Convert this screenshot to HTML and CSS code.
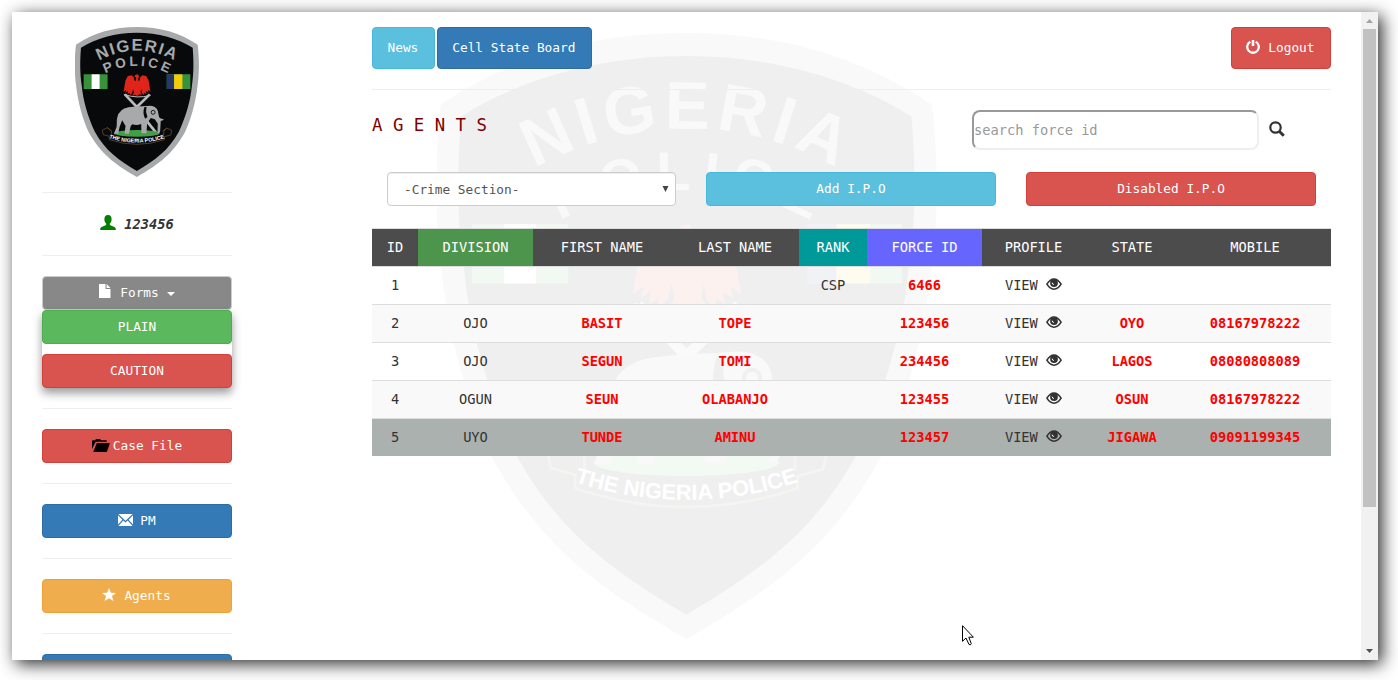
FILE: index.html
```html
<!DOCTYPE html>
<html lang="en">
<head>
<meta charset="utf-8">
<title>Agents</title>
<link rel="stylesheet" href="styles.css">
</head>
<body>
<svg class="defs" width="0" height="0" aria-hidden="true">
  <symbol id="crest" viewBox="225 80 373 450" preserveAspectRatio="none">
    <path fill="#a7a9ab" d="M411 80C480 80 540 97 594 133C600 180 598 225 594 253C588 310 572 360 556 395C520 460 480 490 411 530C342 490 302 460 266 395C250 360 234 310 228 253C224 225 222 180 228 133C282 97 342 80 411 80Z"/>
    <path fill="#07090b" d="M411 97C475 97 535 114 579 142C583 190 581 225 577 253C573 300 558 350 537 395C505 452 465 480 411 512C357 480 317 452 285 395C264 350 249 300 245 253C241 225 239 190 243 142C287 114 347 97 411 97Z"/>
    <path id="arcTop" fill="none" d="M280 192A230 230 0 0 1 542 192"/>
    <path id="arcMid" fill="none" d="M296 232A205 205 0 0 1 526 232"/>
    <path id="arcLow" fill="none" d="M315 409A270 270 0 0 0 507 409"/>
    <text class="crest-name" font-size="50" letter-spacing="4.500"><textPath href="#arcTop" startOffset="50.500%">NIGERIA</textPath></text>
    <text class="crest-name" font-size="41" letter-spacing="8.500"><textPath href="#arcMid" startOffset="51.500%">POLICE</textPath></text>
    <path fill="#38913d" d="M251 222h72v44h-72zM501 222h71v44h-71z"/>
    <path fill="#fff" d="M275 222h24v44h-24z"/>
    <path fill="#25386b" d="M501 222h22v44h-22z"/>
    <path fill="#f5cc0a" d="M523 222h25v44h-25z"/>
    <path fill="#df2519" d="M407 223l6-1 5 5-3 8 1 8 4-4 1-8 7-6 11 2 7 12 6 35-8-6 2 9-8-5 2 9-7-4 0 8-7-7-2-12-2 10 5 8-8-2-7 5-7-4-8 3 5-9-2-11-3 12-7 7 0-8-7 5 2-10-8 5 2-9-8 6 6-34 7-13 11-2 7 6 1 8 4 4 2-8-1-5-5 1z"/>
    <path fill="none" stroke="#b9bbbd" stroke-width="8" d="M375 282l36 38 39-38M435 355l38 47"/>
    <path fill="none" stroke="#b9bbbd" stroke-width="3" d="M372 282q40 14 80 3"/>
    <ellipse cx="411" cy="399" rx="69" ry="10" fill="#3fa045"/>
    <path fill="#a7a9ab" d="M352 352q6-27 34-31 24-3 40-3l16-1q25-3 32 14l4 20q5 6 14 5-2 7-9 5l-2 33q-3 7-8 3l1-27-9-13-12-4-11 16-2 30h-15l-1-28q-14 5-26 1l-5 4-6 24h-13l3-23-10-17-8 20-4 20h-13l8-20 2-23-5 19z"/>
    <path fill="#07090b" d="M434 320q-7 18 2 35l7-5q-7-15-3-30z"/>
    <circle cx="460" cy="336" r="6" fill="none" stroke="#17191b" stroke-width="3"/>
    <path fill="none" stroke="#7a5b2d" stroke-width="2" d="M335 393l-13-11-15 8 3 13 18 5v10q84 28 166 0v-9l19-5 3-14-16-7-12 10M322 382l13 10v12M500 384l-8 9v12"/>
    <text class="crest-motto" font-size="16.300"><textPath href="#arcLow" startOffset="50%">THE NIGERIA POLICE</textPath></text>
  </symbol>
  <symbol id="eye" viewBox="0 0 16 12">
    <path fill="none" stroke="currentColor" stroke-width="1.600" d="M.9 6.2Q4 1 8 1t7.1 5.200Q12 11.200 8 11.200T.9 6.200z"/>
    <circle cx="8" cy="5" r="3.900" fill="currentColor"/>
    <path fill="none" stroke="#fff" stroke-width="1" d="M6.200 4.700q0 1.800 1.700 1.800"/>
  </symbol>
</svg>

<div class="window">
  <svg class="watermark"><use href="#crest"/></svg>

  <aside class="sidebar">
    <svg class="logo"><use href="#crest"/></svg>
    <hr>
    <div class="user">
      <svg class="icon-user" viewBox="0 0 16 15"><path fill="green" d="M8 0c2.700 0 3.600 1.800 3.600 4.200 0 2.200-.9 3.500-1.700 4.300-.3 1 0 1.600.9 1.900l3.700 1.500c1 .4 1.300 1.300 1.300 3.100H.2c0-1.800.3-2.700 1.300-3.100l3.700-1.500c.9-.3 1.200-.9.9-1.900-.8-.8-1.700-2.100-1.700-4.300C4.400 1.800 5.300 0 8 0z"/></svg>
      <span>123456</span>
    </div>
    <hr>
    <div class="dropdown">
      <button class="btn gray"><svg class="icon-file" viewBox="0 0 12 14"><path fill="#fff" d="M0 0h6.500v5H11.500v9H0zM7.600 0l3.900 4H7.600z"/></svg><span>Forms</span><i class="caret"></i></button>
      <div class="menu">
        <button class="btn green">PLAIN</button>
        <button class="btn red">CAUTION</button>
      </div>
    </div>
    <hr>
    <button class="btn red"><svg class="icon-folder" viewBox="0 0 18 13"><path d="M0 10V2.200q0-.9.9-.9H3L4 0h4l1 1.300h5q.8 0 .8.900v.6H4.500q-1 0-1.400.9zM4.800 4H17.300q.7 0 .4.700l-2.600 7.600q-.2.700-1 .7H1.200z"/></svg><span>Case File</span></button>
    <hr>
    <button class="btn blue"><svg class="icon-mail" viewBox="0 0 15 12"><path fill="#fff" d="M.4 0h14.200L7.500 6.700zM0 1.200L4.400 5.700 0 10.400zM15 1.200v9.200l-4.400-4.700zM5.300 6.600l2.200 2 2.200-2L14.600 12H.4z"/></svg><span>PM</span></button>
    <hr>
    <button class="btn orange"><svg class="icon-star" viewBox="0 0 14 13"><path fill="#fff" d="M7 0l1.900 4.800 5.100.1-4 3.200L11.400 13 7 10.200 2.600 13 4 8.100 0 4.900l5.100-.1z"/></svg><span>Agents</span></button>
    <hr>
    <button class="btn blue"></button>
  </aside>

  <main class="main">
    <div class="topbar">
      <button class="btn tall cyan">News</button>
      <button class="btn tall blue">Cell State Board</button>
      <button class="btn tall red logout"><svg class="icon-off" viewBox="0 0 14 14"><path fill="none" stroke="#fff" stroke-width="2.300" d="M4.300 1.800A5.800 5.800 0 1 0 9.700 1.800"/><path stroke="#fff" stroke-width="2.600" d="M7 0v6"/></svg><span>Logout</span></button>
    </div>
    <hr>
    <div class="heading">
      <h1>A G E N T S</h1>
      <input class="search" type="text" placeholder="search force id">
      <svg class="icon-search" viewBox="0 0 16 16"><circle cx="6.500" cy="6.500" r="5.200" fill="none" stroke="#333" stroke-width="2.200"/><path stroke="#333" stroke-width="3" d="M10.200 10.200l4.600 4.600"/></svg>
    </div>
    <div class="filters">
      <div class="select"><span>-Crime Section-</span><svg class="arrow" viewBox="0 0 6 6"><path fill="#444" d="M0 0h6L3 6z"/></svg></div>
      <button class="btn cyan">Add I.P.O</button>
      <button class="btn red">Disabled I.P.O</button>
    </div>
    <table>
      <colgroup><col class="c46"><col class="c115"><col class="c138"><col class="c128"><col class="c68"><col class="c115"><col class="c103"><col class="c94"><col></colgroup>
      <thead>
        <tr><th>ID</th><th class="h-division">DIVISION</th><th>FIRST NAME</th><th>LAST NAME</th><th class="h-rank">RANK</th><th class="h-force">FORCE ID</th><th>PROFILE</th><th>STATE</th><th>MOBILE</th></tr>
      </thead>
      <tbody>
        <tr><td>1</td><td></td><td></td><td></td><td>CSP</td><td><b>6466</b></td><td>VIEW <svg class="eye"><use href="#eye"/></svg></td><td></td><td></td></tr>
        <tr class="stripe"><td>2</td><td>OJO</td><td><b>BASIT</b></td><td><b>TOPE</b></td><td></td><td><b>123456</b></td><td>VIEW <svg class="eye"><use href="#eye"/></svg></td><td><b>OYO</b></td><td><b>08167978222</b></td></tr>
        <tr><td>3</td><td>OJO</td><td><b>SEGUN</b></td><td><b>TOMI</b></td><td></td><td><b>234456</b></td><td>VIEW <svg class="eye"><use href="#eye"/></svg></td><td><b>LAGOS</b></td><td><b>08080808089</b></td></tr>
        <tr class="stripe"><td>4</td><td>OGUN</td><td><b>SEUN</b></td><td><b>OLABANJO</b></td><td></td><td><b>123455</b></td><td>VIEW <svg class="eye"><use href="#eye"/></svg></td><td><b>OSUN</b></td><td><b>08167978222</b></td></tr>
        <tr class="hover"><td>5</td><td>UYO</td><td><b>TUNDE</b></td><td><b>AMINU</b></td><td></td><td><b>123457</b></td><td>VIEW <svg class="eye"><use href="#eye"/></svg></td><td><b>JIGAWA</b></td><td><b>09091199345</b></td></tr>
      </tbody>
    </table>
  </main>

  <div class="scrollbar">
    <svg class="sb-arrow" viewBox="0 0 17 17"><path fill="#a3a3a3" d="M5 11h7L8.500 7z"/></svg>
    <div class="thumb"></div>
    <svg class="sb-arrow" viewBox="0 0 17 17"><path fill="#505050" d="M5 6h7L8.500 10z"/></svg>
  </div>

  <svg class="cursor" viewBox="0 0 12 21"><path fill="#fff" stroke="#000" d="M.5.700V16.300L4 13l3 6.500q1.500 1 2.300-.7L6.800 12.200h4.600z"/></svg>
</div>
</body>
</html>
```
FILE: styles.css
```css
* { box-sizing: border-box; }

body {
  margin: 0;
  height: 680px;
  padding: 12px 20px 20px 12px;
  overflow: hidden;
  background: #fff;
  color: #333;
  font-family: "DejaVu Sans Mono", monospace;
  font-size: 12.79px;
  line-height: 20px;
}

.defs { position: absolute; }

.window {
  position: relative;
  display: flex;
  width: 1366px;
  height: 648px;
  overflow: hidden;
  background: #fff;
  box-shadow: 4px 4px 16px rgba(0, 0, 0, .84);
}

.watermark {
  position: absolute;
  left: 425px;
  top: 21px;
  width: 500px;
  height: 606px;
  opacity: .058;
}

.crest-name {
  font-family: "Liberation Sans", Arial, sans-serif;
  font-weight: bold;
  fill: #a7a9ab;
  text-anchor: middle;
}

.crest-motto {
  font-family: "Liberation Sans", Arial, sans-serif;
  font-weight: bold;
  fill: #fff;
  text-anchor: middle;
}

hr {
  width: 100%;
  margin: 20px 0;
  border: 0;
  border-top: 1px solid #eee;
}

.sidebar {
  position: relative;
  flex: none;
  width: 190px;
  margin-left: 30px;
  padding-top: 15px;
}

.logo {
  display: block;
  width: 124px;
  height: 150px;
  margin: 0 auto 15px;
}

.logo + hr { margin-top: 15px; }

.user {
  display: flex;
  justify-content: center;
  gap: 8px;
  height: 22px;
  font-style: italic;
  font-weight: bold;
  font-size: 13.7px;
  line-height: 22px;
}

.icon-user { width: 16px; height: 15px; margin-top: 2px; }

.btn {
  display: flex;
  align-items: center;
  justify-content: center;
  width: 100%;
  height: 34px;
  padding: 0;
  border: 1px solid;
  border-radius: 4px;
  color: #fff;
  font: inherit;
  white-space: pre;
}

.gray { background: #888; border-color: #ccc; }
.green { background: #5cb85c; border-color: #4cae4c; }
.red { background: #d9534f; border-color: #d43f3a; }
.blue { background: #337ab7; border-color: #2e6da4; }
.orange { background: #f0ad4e; border-color: #eea236; }
.cyan { background: #5bc0de; border-color: #46b8da; }

.menu {
  display: flex;
  flex-direction: column;
  gap: 10px;
  background: #fff;
  border-radius: 4px;
  box-shadow: 0 5px 10px rgba(0, 0, 0, .4);
}

.icon-file { width: 12px; height: 14px; margin: -4px 9px 0 0; }

.caret {
  margin: 2px 0 0 8px;
  border: 4px solid transparent;
  border-top-color: #fff;
  border-bottom: 0;
}

.icon-folder { width: 18px; height: 13px; margin: -2px 3px 0 0; }
.icon-mail { width: 15px; height: 12px; margin: -3px 7px 0 0; }
.icon-star { width: 14px; height: 13px; margin: -4px 8px 0 -1px; }

.main {
  position: relative;
  flex: none;
  width: 959px;
  margin-left: 140px;
  padding-top: 15px;
}

.topbar { display: flex; gap: 2px; }
.tall { width: auto; height: 42px; padding: 0 15.5px 0 14.5px; }
.logout { margin-left: auto; }
.icon-off { width: 14px; height: 14px; margin: -3px 8px 0 0; }

.heading { display: flex; height: 40px; }

h1 {
  width: 600px;
  margin: 3px 0 0;
  color: #800000;
  font-size: 17.36px;
  font-weight: normal;
  line-height: 24px;
}

.search {
  width: 287px;
  height: 40px;
  padding: 1px 0;
  border: 2px solid #eee;
  border-color: #999 #eee #eee #999;
  border-radius: 8px;
  background: #fff;
  font: inherit;
  font-size: 13.7px;
}

.search::placeholder { color: #999; }

.icon-search { width: 16px; height: 16px; margin: 11px 0 0 10px; }

.filters {
  display: grid;
  grid-template-columns: 289px 290px 290px;
  gap: 30px;
  margin: 22px 15px;
}

.select {
  display: flex;
  align-items: center;
  justify-content: space-between;
  height: 34px;
  padding: 1px 6px 0 16px;
  border: 1px solid #ccc;
  border-radius: 4px;
  background: #fff;
  color: #555;
  box-shadow: inset 0 1px 1px rgba(0, 0, 0, .075);
}

.arrow { width: 7px; height: 6px; margin-top: -2px; }

table {
  width: 959px;
  table-layout: fixed;
  border-spacing: 0;
  font-size: 13.7px;
}

.c46 { width: 46px; }
.c115 { width: 115px; }
.c138 { width: 138px; }
.c128 { width: 128px; }
.c68 { width: 68px; }
.c103 { width: 103px; }
.c94 { width: 94px; }

th, td {
  height: 38px;
  padding: 0 0 2px;
  border-top: 1px solid #ddd;
  text-align: center;
  white-space: nowrap;
}

th {
  background: #4c4c4c;
  color: #fff;
  font-weight: normal;
}

.h-division { background: #4d944d; }
.h-rank { background: #009999; }
.h-force { background: #6666ff; }
.stripe { background: #f9f9f9; }
.hover { background: #abb1ae; }
b { color: #f00; }
.eye { width: 16px; height: 12px; vertical-align: 0; }

.scrollbar {
  flex: none;
  display: flex;
  flex-direction: column;
  width: 17px;
  margin-left: auto;
  background: #f1f1f1;
}

.sb-arrow { width: 17px; height: 17px; }
.thumb { width: 13px; height: 478px; margin: 0 2px auto; background: #c1c1c1; }

.cursor {
  position: absolute;
  left: 950px;
  top: 613px;
  width: 12px;
  height: 21px;
}
```
